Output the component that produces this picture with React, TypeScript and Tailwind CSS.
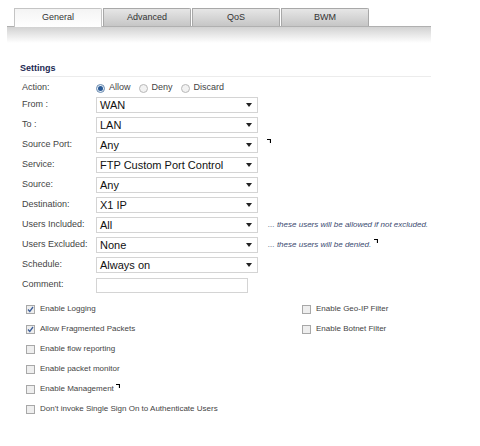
import React from 'react'

const font = "font-['Liberation_Sans','DejaVu_Sans',sans-serif]"

const tabs = ['General', 'Advanced', 'QoS', 'BWM']

function Tick() {
  return (
    <svg width="4" height="4" viewBox="0 0 4 4" className="inline-block">
      <path d="M0 0.5H3.5V4" stroke="#000" strokeWidth="1.2" fill="none" />
    </svg>
  )
}

function Select({ value }: { value: string }) {
  return (
    <div className="w-[162px] h-[16px] border border-[#d4d4d4] bg-white flex items-center justify-between pl-[3px] pr-[5px]">
      <span className="text-[11px] leading-none text-[#111]">{value}</span>
      <svg width="6" height="4" viewBox="0 0 6 4">
        <path d="M0 0H6L3 4Z" fill="#222" />
      </svg>
    </div>
  )
}

function Radio({ on }: { on?: boolean }) {
  return (
    <span
      className={
        'w-[9px] h-[9px] rounded-full border inline-flex items-center justify-center ' +
        (on ? 'border-[#6a8bb0] bg-[#e6eef6]' : 'border-[#b8b8b8] bg-[#f2f2f2]')
      }
    >
      {on && <span className="w-[5px] h-[5px] rounded-full bg-[#2a5a96]" />}
    </span>
  )
}

function Check({ on, label, tick }: { on?: boolean; label: string; tick?: boolean }) {
  return (
    <div className="h-[20px] flex items-center gap-[5px]">
      <span className="w-[9px] h-[9px] border border-[#a8a8a8] bg-[#eeeeee] flex items-center justify-center">
        {on && (
          <svg width="7" height="7" viewBox="0 0 7 7">
            <path d="M1 3.5L2.8 5.5L6 1" stroke="#3d5f9a" strokeWidth="1.3" fill="none" />
          </svg>
        )}
      </span>
      <span className="text-[8px] text-[#444]">{label}</span>
      {tick && (
        <span className="-ml-[3px] -mt-[8px]">
          <Tick />
        </span>
      )}
    </div>
  )
}

const rows: { label: string; value: string; note?: string; tick?: boolean }[] = [
  { label: 'From :', value: 'WAN' },
  { label: 'To :', value: 'LAN' },
  { label: 'Source Port:', value: 'Any', tick: true },
  { label: 'Service:', value: 'FTP Custom Port Control' },
  { label: 'Source:', value: 'Any' },
  { label: 'Destination:', value: 'X1 IP' },
  { label: 'Users Included:', value: 'All', note: '... these users will be allowed if not excluded.' },
  { label: 'Users Excluded:', value: 'None', note: '... these users will be denied.', tick: true },
  { label: 'Schedule:', value: 'Always on' },
]

export default function App() {
  return (
    <div className={'w-[480px] h-[446px] bg-white ' + font}>
      <div className="flex pl-[14px] pt-[8px] gap-[1px]">
        {tabs.map((t, i) => (
          <div
            key={t}
            className={
              'w-[88px] h-[18px] flex items-center justify-center text-[9px] rounded-tr-[2px] ' +
              (i === 0
                ? 'bg-gradient-to-b from-[#f4f4f4] to-[#ffffff] border border-b-0 border-[#c4c4c4] text-[#333] h-[19px] -mb-[1px] relative z-10'
                : 'bg-gradient-to-b from-[#e6e6e6] to-[#c6c6c6] border border-b-0 border-[#a8a8a8] text-[#333]')
            }
          >
            {t}
          </div>
        ))}
      </div>
      <div className="ml-[7px] w-[424px] h-[17px] border-t border-[#b0b0b0] bg-gradient-to-b from-[#d2d2d2] to-white" />

      <div className="ml-[20px] mt-[19px] w-[411px]">
        <div className="text-[9px] font-bold text-[#1c2a54] pb-[2px] border-b border-[#ececec] leading-[12px]">
          Settings
        </div>
      </div>

      <div className="ml-[22px] mt-[4px] text-[9px] text-[#444]">
        <div className="h-[14px] flex items-center">
          <span className="w-[74px]">Action:</span>
          <span className="flex items-center gap-[4px]">
            <Radio on />
            <span className="mr-[4px]">Allow</span>
            <Radio />
            <span className="mr-[4px]">Deny</span>
            <Radio />
            <span>Discard</span>
          </span>
        </div>
        {rows.map((r) => (
          <div key={r.label} className="h-[20px] flex items-center">
            <span className="w-[74px]">{r.label}</span>
            <Select value={r.value} />
            {r.note && <span className="ml-[10px] italic text-[8px] text-[#3a4a70]">{r.note}</span>}
            {r.tick && (
              <span className={(r.note ? 'ml-[3px]' : 'ml-[9px]') + ' -mt-[8px]'}>
                <Tick />
              </span>
            )}
          </div>
        ))}
        <div className="h-[20px] flex items-center">
          <span className="w-[74px]">Comment:</span>
          <div className="w-[152px] h-[15px] border border-[#d4d4d4] bg-white" />
        </div>
      </div>

      <div className="ml-[26px] mt-[4px] flex">
        <div className="w-[276px]">
          <Check on label="Enable Logging" />
          <Check on label="Allow Fragmented Packets" />
          <Check label="Enable flow reporting" />
          <Check label="Enable packet monitor" />
          <Check label="Enable Management" tick />
          <Check label="Don't invoke Single Sign On to Authenticate Users" />
        </div>
        <div>
          <Check label="Enable Geo-IP Filter" />
          <Check label="Enable Botnet Filter" />
        </div>
      </div>
    </div>
  )
}
